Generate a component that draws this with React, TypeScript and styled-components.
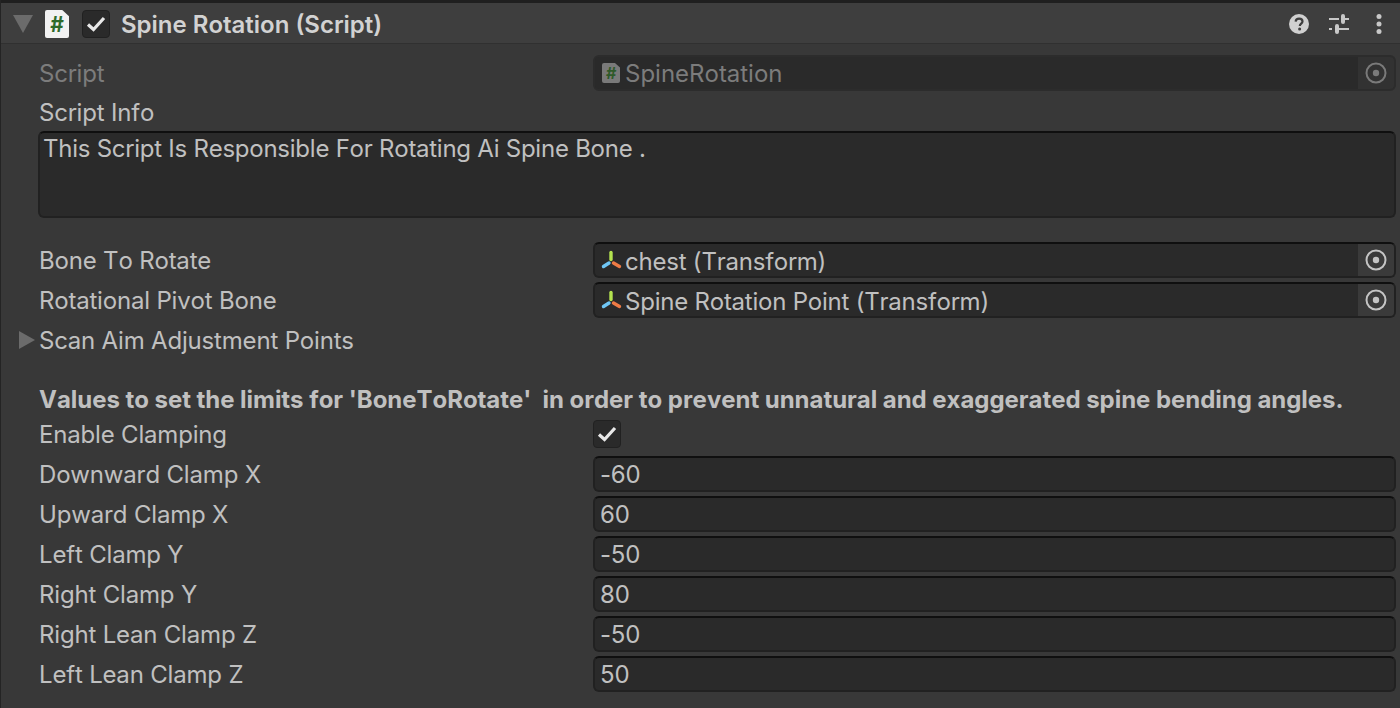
import React from "react";
import styled, { createGlobalStyle } from "styled-components";

const GlobalStyle = createGlobalStyle`
  html, body {
    margin: 0;
    padding: 0;
    background: #383838;
  }
  body {
    font-family: "Inter", "Liberation Sans", sans-serif;
    font-kerning: none;
    letter-spacing: -0.18px;
    overflow: hidden;
  }
`;

const Inspector = styled.div`
  width: 1400px;
  height: 708px;
  box-sizing: border-box;
  background: #383838;
  border-left: 1px solid #242424;
  overflow: hidden;
`;

const TopLine = styled.div`
  height: 3px;
  background: #1f1f1f;
  margin-left: -1px;
`;

const Header = styled.div`
  height: 41px;
  box-sizing: border-box;
  background: #3e3e3e;
  border-bottom: 1px solid #303030;
  display: flex;
  align-items: center;
  padding: 2px 0 0 12px;
`;

const Title = styled.span`
  font-size: 24px;
  font-weight: 600;
  letter-spacing: 0;
  color: #d2d2d2;
  margin-left: 11px;
  flex: 1;
`;

const HeaderIcons = styled.div`
  display: flex;
  align-items: center;
  padding-right: 18px;
`;

const HeaderIcon = styled.span<{ $gap: number }>`
  display: flex;
  margin-left: ${(p) => p.$gap}px;
`;

const ScriptBadge = styled.span<{ $dim?: boolean }>`
  width: ${(p) => (p.$dim ? 18 : 24)}px;
  height: ${(p) => (p.$dim ? 20 : 28)}px;
  margin-left: ${(p) => (p.$dim ? 0 : 12)}px;
  margin-right: ${(p) => (p.$dim ? 0 : 13)}px;
  flex: none;
  display: flex;
  align-items: center;
  justify-content: center;
  background: ${(p) => (p.$dim ? "#7a7a7a" : "#f2f2f2")};
  clip-path: polygon(0 0, 72% 0, 100% 22%, 100% 100%, 0 100%);
  border-radius: 2px;
  color: ${(p) => (p.$dim ? "#2f5a2a" : "#2f6b2b")};
  font-size: ${(p) => (p.$dim ? 16 : 21)}px;
  font-weight: 700;
  line-height: 1;
`;

const CheckBox = styled.span`
  width: 28px;
  height: 28px;
  box-sizing: border-box;
  flex: none;
  background: #2a2a2a;
  border: 1px solid #212121;
  border-radius: 4px;
  display: flex;
  align-items: center;
  justify-content: center;
`;

const Body = styled.div`
  padding: 9px 4px 0 38px;
`;

const Row = styled.div`
  height: 40px;
  display: flex;
  align-items: center;
  position: relative;
`;

const Label = styled.span<{ $dim?: boolean }>`
  width: 554px;
  flex: none;
  font-size: 24px;
  color: ${(p) => (p.$dim ? "#7c7c7c" : "#c0c0c0")};
  white-space: nowrap;
`;

const Field = styled.div<{ $dim?: boolean }>`
  flex: 1;
  height: 36px;
  box-sizing: border-box;
  background: #2a2a2a;
  border: 2px solid ${(p) => (p.$dim ? "#2c2c2c" : "#212121")};
  border-top-color: ${(p) => (p.$dim ? "#2c2c2c" : "#0f0f0f")};
  border-radius: 6px;
  display: flex;
  align-items: center;
  overflow: hidden;
  font-size: 24px;
  color: ${(p) => (p.$dim ? "#7c7c7c" : "#c0c0c0")};
`;

const NumberField = styled(Field)`
  padding-left: 5px;
`;

const FieldIcon = styled.span`
  width: 30px;
  box-sizing: border-box;
  padding-left: 2px;
  flex: none;
  display: flex;
  align-items: center;
  justify-content: center;
`;

const FieldText = styled.span<{ $dim?: boolean }>`
  flex: 1;
  white-space: nowrap;
  padding-top: ${(p) => (p.$dim ? 0 : 2)}px;
  letter-spacing: ${(p) => (p.$dim ? 0 : -0.22)}px;
`;

const PickerButton = styled.span<{ $dim?: boolean }>`
  width: 36px;
  height: 100%;
  flex: none;
  background: ${(p) => (p.$dim ? "#323232" : "#3a3a3a")};
  display: flex;
  align-items: center;
  justify-content: center;
`;

const TextAreaLabelRow = styled(Row)`
  height: 38px;
`;

const TextArea = styled.div`
  height: 87px;
  box-sizing: border-box;
  background: #2a2a2a;
  border: 2px solid #212121;
  border-top-color: #0f0f0f;
  border-radius: 6px;
  margin: 0 0 22px -1px;
  padding: 1px 3px;
  font-size: 24px;
  line-height: 30px;
  letter-spacing: -0.24px;
  color: #c0c0c0;
`;

const Foldout = styled(Row)`
  margin-bottom: 24px;
`;

const FoldoutArrow = styled.svg`
  position: absolute;
  left: -20px;
  top: 11px;
`;

const Note = styled.div`
  height: 30px;
  display: flex;
  align-items: center;
  font-size: 24px;
  font-weight: 700;
  letter-spacing: -0.04px;
  color: #c0c0c0;
  white-space: pre;
`;

const CheckIcon = () => (
  <svg width="22" height="22" viewBox="0 0 22 22" fill="none">
    <path d="M3 11.5 L8.5 16.5 L19 5" stroke="#e8e8e8" strokeWidth="3.2" />
  </svg>
);

const TargetIcon = ({ dim }: { dim?: boolean }) => (
  <svg width="22" height="22" viewBox="0 0 22 22" fill="none">
    <circle cx="11" cy="11" r="9.5" stroke={dim ? "#7a7a7a" : "#c4c4c4"} strokeWidth="2" />
    <circle cx="11" cy="11" r="3.2" fill={dim ? "#7a7a7a" : "#c4c4c4"} />
  </svg>
);

const TransformIcon = () => (
  <svg width="22" height="22" viewBox="0 0 22 22" fill="none" strokeLinecap="round" strokeWidth="3.4">
    <path d="M11 3.5 V10.5" stroke="#b4e34f" />
    <path d="M13.5 14 L19.5 17.5" stroke="#ee7b45" />
    <path d="M9 14 L3.5 17.5" stroke="#6fc6f5" />
  </svg>
);

const HelpIcon = () => (
  <svg width="20" height="20" viewBox="0 0 20 20">
    <circle cx="10" cy="10" r="10" fill="#d0d0d0" />
    <path
      d="M6.6 7.6 C6.8 5.6 8.2 4.6 10.1 4.6 C12.2 4.6 13.5 5.8 13.5 7.4 C13.5 9.6 10.8 9.6 10.8 12"
      fill="none"
      stroke="#3e3e3e"
      strokeWidth="2.2"
    />
    <circle cx="10.6" cy="15" r="1.5" fill="#3e3e3e" />
  </svg>
);

const SlidersIcon = () => (
  <svg width="20" height="20" viewBox="0 0 20 20" fill="#c8c8c8">
    <rect x="0" y="4" width="10" height="2" />
    <rect x="12" y="0" width="4" height="10" rx="2" />
    <rect x="16" y="4" width="4" height="2" />
    <rect x="0" y="14" width="3" height="2" />
    <rect x="6" y="10" width="4" height="10" rx="2" />
    <rect x="10" y="14" width="10" height="2" />
  </svg>
);

const DotsIcon = () => (
  <svg width="6" height="20" viewBox="0 0 6 20" fill="#c8c8c8">
    <circle cx="3" cy="2.6" r="2.5" />
    <circle cx="3" cy="10" r="2.5" />
    <circle cx="3" cy="17.4" r="2.5" />
  </svg>
);

const clamps = [
  ["Downward Clamp X", "-60"],
  ["Upward Clamp X", "60"],
  ["Left Clamp Y", "-50"],
  ["Right Clamp Y", "80"],
  ["Right Lean Clamp Z", "-50"],
  ["Left Lean Clamp Z", "50"],
];

const App = () => {
  return (
    <Inspector>
      <GlobalStyle />
      <TopLine />
      <Header>
        <svg width="20" height="18" viewBox="0 0 20 18">
          <path d="M0 0 H20 L10 18 Z" fill="#6b6b6b" />
        </svg>
        <ScriptBadge>#</ScriptBadge>
        <CheckBox>
          <CheckIcon />
        </CheckBox>
        <Title>Spine Rotation (Script)</Title>
        <HeaderIcons>
          <HeaderIcon $gap={0}>
            <HelpIcon />
          </HeaderIcon>
          <HeaderIcon $gap={20}>
            <SlidersIcon />
          </HeaderIcon>
          <HeaderIcon $gap={27}>
            <DotsIcon />
          </HeaderIcon>
        </HeaderIcons>
      </Header>
      <Body>
        <Row>
          <Label $dim>Script</Label>
          <Field $dim>
            <FieldIcon>
              <ScriptBadge $dim>#</ScriptBadge>
            </FieldIcon>
            <FieldText $dim>SpineRotation</FieldText>
            <PickerButton $dim>
              <TargetIcon dim />
            </PickerButton>
          </Field>
        </Row>
        <TextAreaLabelRow>
          <Label>Script Info</Label>
        </TextAreaLabelRow>
        <TextArea>This Script Is Responsible For Rotating Ai Spine Bone .</TextArea>
        <Row>
          <Label>Bone To Rotate</Label>
          <Field>
            <FieldIcon>
              <TransformIcon />
            </FieldIcon>
            <FieldText>chest (Transform)</FieldText>
            <PickerButton>
              <TargetIcon />
            </PickerButton>
          </Field>
        </Row>
        <Row>
          <Label>Rotational Pivot Bone</Label>
          <Field>
            <FieldIcon>
              <TransformIcon />
            </FieldIcon>
            <FieldText>Spine Rotation Point (Transform)</FieldText>
            <PickerButton>
              <TargetIcon />
            </PickerButton>
          </Field>
        </Row>
        <Foldout>
          <FoldoutArrow width="16" height="18" viewBox="0 0 16 18">
            <path d="M0 0 L16 9 L0 18 Z" fill="#6b6b6b" />
          </FoldoutArrow>
          <Label>Scan Aim Adjustment Points</Label>
        </Foldout>
        <Note>{"Values to set the limits for 'BoneToRotate'  in order to prevent unnatural and exaggerated spine bending angles."}</Note>
        <Row>
          <Label>Enable Clamping</Label>
          <CheckBox>
            <CheckIcon />
          </CheckBox>
        </Row>
        {clamps.map(([name, value]) => (
          <Row key={name}>
            <Label>{name}</Label>
            <NumberField>{value}</NumberField>
          </Row>
        ))}
      </Body>
    </Inspector>
  );
};

export default App;
